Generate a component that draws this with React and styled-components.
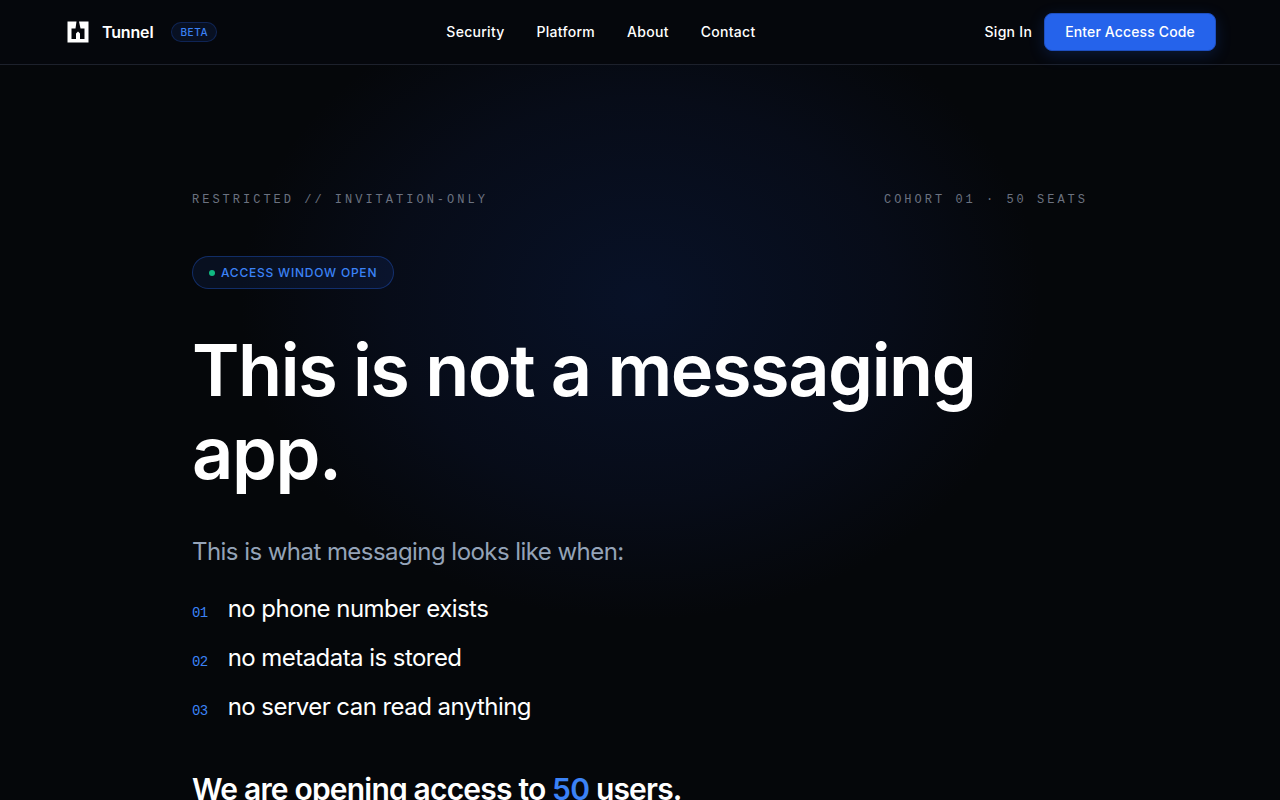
import React from "react";
import styled, { createGlobalStyle } from "styled-components";

const Global = createGlobalStyle`
  *, *::before, *::after { box-sizing: border-box; }
  body {
    margin: 0;
    background: #05070a;
    color: #fff;
    font-family: Inter, "Liberation Sans", sans-serif;
  }
  a { color: inherit; text-decoration: none; }
  h1, h2, p, ol { margin: 0; padding: 0; }
`;

const mono = `"Liberation Mono", monospace`;

const Page = styled.div`
  min-height: 100vh;
  background:
    radial-gradient(
      ellipse 500px 400px at 50% 300px,
      rgba(12, 32, 80, 0.42),
      rgba(14, 28, 70, 0.24) 50%,
      rgba(10, 28, 70, 0) 80%
    ),
    #05070a;
`;

const Header = styled.header`
  display: flex;
  align-items: center;
  justify-content: space-between;
  height: 65px;
  padding: 0 64px;
  background: #05070c;
  border-bottom: 1px solid #1d212c;
`;

const Brand = styled.a`
  display: flex;
  align-items: center;
  gap: 10px;
  font-size: 16px;
  font-weight: 600;
  letter-spacing: -0.01em;
`;

const Mark = styled.svg`
  width: 28px;
  height: 28px;
`;

const BetaTag = styled.span`
  margin-left: 8px;
  padding: 0 8px;
  border: 1px solid rgba(37, 99, 235, 0.25);
  border-radius: 10px;
  background: rgba(37, 99, 235, 0.1);
  color: #3b82f6;
  font-size: 10px;
  font-weight: 500;
  line-height: 18px;
  letter-spacing: 0.06em;
`;

const Nav = styled.nav`
  display: flex;
  gap: 32px;
`;

const NavLink = styled.a`
  font-size: 14px;
  font-weight: 500;
  line-height: 20px;
  letter-spacing: 0.02em;
`;

const Actions = styled.div`
  display: flex;
  align-items: center;
  gap: 12px;
`;

const AccessButton = styled.button`
  padding: 8px 20px;
  border: 1px solid #1e4fc0;
  border-radius: 8px;
  background: #2563eb;
  box-shadow: 0 4px 16px rgba(37, 99, 235, 0.2);
  color: #fff;
  font-family: inherit;
  font-size: 14px;
  font-weight: 500;
  line-height: 20px;
  letter-spacing: 0.01em;
`;

const Hero = styled.main`
  max-width: 896px;
  margin: 0 auto;
  padding: 125px 0 96px;
`;

const MetaRow = styled.div`
  display: flex;
  justify-content: space-between;
  color: #6b7280;
  font-family: ${mono};
  font-size: 12px;
  line-height: 20px;
  letter-spacing: 3px;
`;

const Status = styled.div`
  display: flex;
  align-items: center;
  gap: 6px;
  width: fit-content;
  height: 33px;
  margin-top: 46px;
  padding: 0 16px;
  border: 1px solid rgba(37, 99, 235, 0.35);
  border-radius: 17px;
  background: rgba(37, 99, 235, 0.1);
  color: #3b82f6;
  font-size: 12px;
  font-weight: 500;
  letter-spacing: 0.065em;
`;

const Dot = styled.span`
  width: 6px;
  height: 6px;
  border-radius: 50%;
  background: #10b981;
`;

const Title = styled.h1`
  margin-top: 39px;
  font-size: 72px;
  font-weight: 600;
  line-height: 83px;
  letter-spacing: -0.02em;
`;

const Lead = styled.p`
  margin-top: 40px;
  color: #94a3b8;
  font-size: 24px;
  line-height: 36px;
  letter-spacing: -0.023em;
`;

const Points = styled.ol`
  display: flex;
  flex-direction: column;
  gap: 13px;
  margin-top: 21px;
  list-style: none;
`;

const Point = styled.li`
  display: flex;
  align-items: baseline;
  gap: 20px;
  font-size: 24px;
  line-height: 36px;
  letter-spacing: -0.023em;
`;

const PointNumber = styled.span`
  color: #3b82f6;
  font-family: ${mono};
  font-size: 14px;
  line-height: 20px;
`;

const Offer = styled.h2`
  margin-top: 44px;
  font-size: 30px;
  font-weight: 600;
  line-height: 40px;
  letter-spacing: -0.027em;
`;

const Accent = styled.span`
  color: #3b82f6;
`;

const links = ["Security", "Platform", "About", "Contact"];
const points = [
  "no phone number exists",
  "no metadata is stored",
  "no server can read anything",
];

export default function App() {
  return (
    <Page>
      <Global />
      <Header>
        <Brand href="#">
          <Mark viewBox="0 0 28 28" aria-hidden="true">
            <path
              fill="#fff"
              d="M3.500 3.500H12.500L11.500 10.500H7.500V21H12V15.500L14 13.500L16 15.500V21H20.500V10.500H16.500L15 3.500H24.500V24.500H3.500Z"
            />
          </Mark>
          Tunnel
          <BetaTag>BETA</BetaTag>
        </Brand>
        <Nav aria-label="Main">
          {links.map((label) => (
            <NavLink key={label} href={`#${label.toLowerCase()}`}>
              {label}
            </NavLink>
          ))}
        </Nav>
        <Actions>
          <NavLink href="#sign-in">Sign In</NavLink>
          <AccessButton type="button">Enter Access Code</AccessButton>
        </Actions>
      </Header>
      <Hero>
        <MetaRow>
          <span>RESTRICTED // INVITATION-ONLY</span>
          <span>COHORT 01 · 50 SEATS</span>
        </MetaRow>
        <Status>
          <Dot />
          ACCESS WINDOW OPEN
        </Status>
        <Title>This is not a messaging app.</Title>
        <Lead>This is what messaging looks like when:</Lead>
        <Points>
          {points.map((text, i) => (
            <Point key={text}>
              <PointNumber>{`0${i + 1}`}</PointNumber>
              {text}
            </Point>
          ))}
        </Points>
        <Offer>
          We are opening access to <Accent>50</Accent> users.
        </Offer>
      </Hero>
    </Page>
  );
}
